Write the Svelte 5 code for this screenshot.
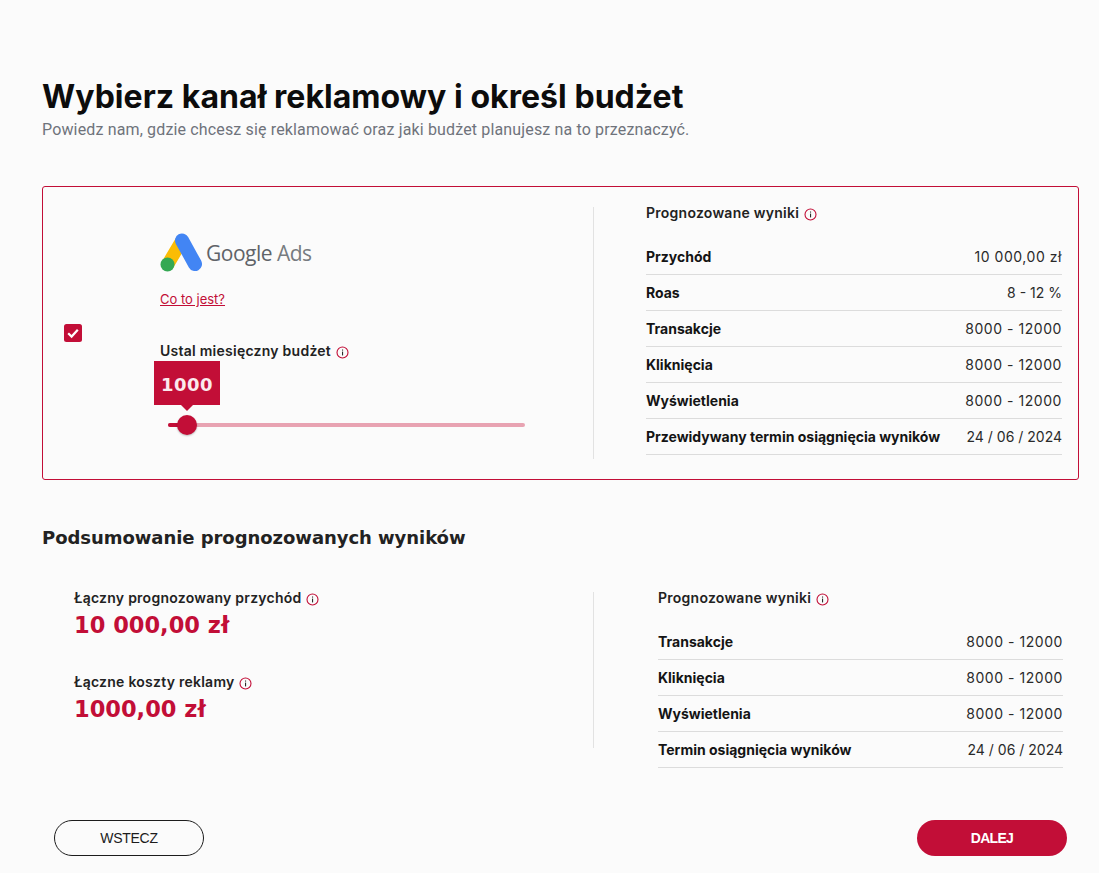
<script>
  const channelRows = [
    { label: 'Przychód', value: '10 000,00 zł' },
    { label: 'Roas', value: '8 - 12 %', tight: true },
    { label: 'Transakcje', value: '8000 - 12000' },
    { label: 'Kliknięcia', value: '8000 - 12000' },
    { label: 'Wyświetlenia', value: '8000 - 12000' },
    { label: 'Przewidywany termin osiągnięcia wyników', value: '24 / 06 / 2024', tight: true }
  ];
  const summaryRows = [
    { label: 'Transakcje', value: '8000 - 12000' },
    { label: 'Kliknięcia', value: '8000 - 12000' },
    { label: 'Wyświetlenia', value: '8000 - 12000' },
    { label: 'Termin osiągnięcia wyników', value: '24 / 06 / 2024', tight: true }
  ];
</script>

{#snippet info()}
  <svg class="info" width="13" height="13" viewBox="0 0 13 13" aria-hidden="true">
    <circle cx="6.5" cy="6.5" r="5.5" fill="none" stroke="#c20e37" stroke-width="1.1" />
    <rect x="6" y="5.6" width="1.1" height="3.8" fill="#2a2a2a" />
    <rect x="6" y="3.5" width="1.1" height="1.1" fill="#2a2a2a" />
  </svg>
{/snippet}

{#snippet results(rows)}
  <h3 class="label results-title">Prognozowane wyniki {@render info()}</h3>
  <div class="rows">
    {#each rows as row}
      <div class="row">
        <span class="row-label">{row.label}</span>
        <span class="row-value" class:tight={row.tight}>{row.value}</span>
      </div>
    {/each}
  </div>
{/snippet}

<main class="page">
  <h1>Wybierz kanał reklamowy i określ budżet</h1>
  <p class="lead">Powiedz nam, gdzie chcesz się reklamować oraz jaki budżet planujesz na to przeznaczyć.</p>

  <section class="card">
    <div class="check">
      <svg width="18" height="18" viewBox="0 0 18 18" aria-hidden="true">
        <rect width="18" height="18" rx="2.5" fill="#c20e37" />
        <path d="M4.2 9.2 7.6 12.6 13.8 5.8" fill="none" stroke="#fff" stroke-width="2.2" />
      </svg>
    </div>
    <div class="channel">
      <div class="logo">
        <svg width="44" height="40" viewBox="0 0 44 40" aria-hidden="true">
          <path d="M21 9 8 31" stroke="#fbbc04" stroke-width="13" stroke-linecap="round" />
          <path d="M22 7.500 35 31" stroke="#4285f4" stroke-width="14" stroke-linecap="round" />
          <circle cx="7.500" cy="31.500" r="7" fill="#34a853" />
        </svg>
        <span class="logo-text">Google <span class="ads">Ads</span></span>
      </div>
      <a class="what" href="#co">Co to jest?</a>
      <h3 class="label budget">Ustal miesięczny budżet {@render info()}</h3>
      <div class="slider">
        <div class="bubble">1000</div>
        <div class="track"><div class="fill"></div><div class="thumb"></div></div>
      </div>
    </div>
    <div class="divider"></div>
    <div class="side">
      {@render results(channelRows)}
    </div>
  </section>

  <h2>Podsumowanie prognozowanych wyników</h2>

  <section class="summary">
    <div class="totals">
      <h3 class="label">Łączny prognozowany przychód {@render info()}</h3>
      <div class="amount">10 000,00 zł</div>
      <h3 class="label second">Łączne koszty reklamy {@render info()}</h3>
      <div class="amount">1000,00 zł</div>
    </div>
    <div class="divider"></div>
    <div class="side">
      {@render results(summaryRows)}
    </div>
  </section>

  <div class="actions">
    <button class="btn back">WSTECZ</button>
    <button class="btn next">DALEJ</button>
  </div>
</main>

<style>
  :global(body) {
    margin: 0;
    background: #fbfbfb;
  }

  .page {
    box-sizing: border-box;
    width: 1099px;
    height: 873px;
    padding: 78px 20px 0 42px;
    overflow: hidden;
    font-family: "DejaVu Sans", sans-serif;
    color: #222;
  }

  h1 {
    margin: 0;
    font-family: "Inter", sans-serif;
    font-weight: 700;
    font-size: 32px;
    line-height: 38px;
    letter-spacing: 0.05px;
    color: #0c0c0c;
  }

  .lead {
    margin: 4px 0 0;
    font-family: "Roboto", sans-serif;
    font-size: 16px;
    line-height: 20px;
    letter-spacing: 0.15px;
    color: #6f737b;
  }

  .card {
    box-sizing: border-box;
    display: grid;
    grid-template-columns: 117px 433px 1px 1fr;
    height: 294px;
    margin-top: 46px;
    padding: 20px 16px 20px 0;
    border: 1px solid #c20e37;
    border-radius: 3px;
  }

  .check {
    align-self: center;
    padding-left: 21px;
    line-height: 0;
  }

  .channel {
    padding-top: 26px;
  }

  .logo {
    display: flex;
    align-items: center;
    height: 40px;
  }

  .logo-text {
    margin-left: 2px;
    font-family: "Open Sans", sans-serif;
    font-size: 21px;
    letter-spacing: -0.5px;
    color: #5f6368;
  }

  .ads {
    color: #777b80;
  }

  .what {
    display: block;
    margin-top: 18px;
    font-family: "Inter", sans-serif;
    font-size: 13px;
    line-height: 16px;
    color: #c20e37;
    text-decoration: underline;
  }

  .label {
    margin: 0;
    font-family: "Inter", sans-serif;
    font-weight: 600;
    font-size: 14px;
    line-height: 16px;
    letter-spacing: 0.25px;
    color: #222;
  }

  .info {
    margin-left: 1px;
    vertical-align: -2.500px;
  }

  .budget {
    margin-top: 36px;
  }

  .slider {
    position: relative;
    width: 357px;
    height: 66px;
    margin: 1px 0 0 8px;
  }

  .bubble {
    position: absolute;
    left: -14px;
    top: 1px;
    width: 66px;
    height: 44px;
    background: #c20e37;
    color: #fbe9ed;
    font-family: "DejaVu Sans", sans-serif;
    font-weight: 700;
    font-size: 18px;
    line-height: 47px;
    letter-spacing: 0.5px;
    text-align: center;
  }

  .bubble::after {
    content: "";
    position: absolute;
    left: 27px;
    top: 44px;
    border: 6px solid transparent;
    border-top-color: #c20e37;
    border-bottom-width: 0;
  }

  .track {
    position: absolute;
    left: 0;
    right: 0;
    top: 63px;
    height: 4px;
    border-radius: 2px;
    background: #e8a3b2;
  }

  .fill {
    width: 20px;
    height: 4px;
    border-radius: 2px;
    background: #c20e37;
  }

  .thumb {
    position: absolute;
    left: 9px;
    top: -8px;
    width: 20px;
    height: 20px;
    border-radius: 50%;
    background: #c20e37;
    box-shadow: 0 1px 2px rgba(0, 0, 0, 0.25);
  }

  .divider {
    background: #e2e2e2;
  }

  .side {
    padding-left: 52px;
  }

  .results-title {
    margin-top: -2px;
    margin-bottom: 18px;
  }

  .row {
    box-sizing: border-box;
    display: flex;
    justify-content: space-between;
    align-items: center;
    height: 36px;
    border-bottom: 1px solid #dcdcdc;
    font-family: "Inter", sans-serif;
    font-size: 14px;
  }

  .row-label {
    font-weight: 700;
    color: #141414;
  }

  .row-value {
    letter-spacing: 0.55px;
    color: #2a2a2a;
  }

  .row-value.tight {
    letter-spacing: 0;
  }

  h2 {
    margin: 46px 0 0;
    font-family: "DejaVu Sans", sans-serif;
    font-weight: 700;
    font-size: 18px;
    line-height: 24px;
    letter-spacing: -0.05px;
    color: #222;
  }

  .summary {
    display: grid;
    grid-template-columns: 551px 1px 1fr;
    height: 156px;
    margin-top: 42px;
  }

  .summary .divider {
    height: 156px;
  }

  .summary .side {
    padding-left: 64px;
    padding-right: 16px;
  }

  .totals {
    padding-left: 32px;
    margin-top: -2px;
  }

  .amount {
    margin-top: 5px;
    font-family: "DejaVu Sans", sans-serif;
    font-weight: 700;
    font-size: 22.5px;
    line-height: 28px;
    color: #c20e37;
  }

  .second {
    margin-top: 35px;
  }

  .actions {
    display: flex;
    justify-content: space-between;
    margin-top: 72px;
    padding: 0 12px;
  }

  .btn {
    width: 150px;
    height: 36px;
    border-radius: 18px;
    font-family: "Liberation Sans", sans-serif;
    font-size: 14px;
    letter-spacing: -0.3px;
    cursor: pointer;
  }

  .back {
    border: 1px solid #1c1c1c;
    background: transparent;
    color: #1c1c1c;
  }

  .next {
    border: 0;
    background: #c20e37;
    color: #fff;
    font-weight: 700;
    letter-spacing: -0.7px;
  }
</style>
